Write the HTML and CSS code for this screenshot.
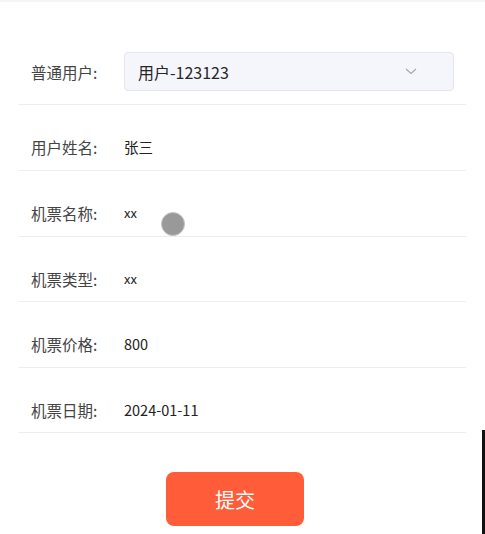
FILE: index.html
```html
<!DOCTYPE html>
<html lang="zh-CN">
<head>
<meta charset="utf-8">
<title>订票</title>
<link rel="stylesheet" href="styles.css">
</head>
<body>
<div class="topbar"></div>
<div class="form">
  <div class="row row-first">
    <span class="label">普通用户:</span>
    <div class="select">
      <span class="select-text">用户-123123</span>
      <svg class="chevron" width="12" height="7" viewBox="0 0 12 7"><path d="M1 1 L6 5.5 L11 1" fill="none" stroke="#a3a6ad" stroke-width="1.1"/></svg>
    </div>
  </div>
  <div class="row">
    <span class="label">用户姓名:</span>
    <span class="value">张三</span>
  </div>
  <div class="row">
    <span class="label">机票名称:</span>
    <span class="value small">xx</span>
  </div>
  <div class="row row-short">
    <span class="label">机票类型:</span>
    <span class="value small">xx</span>
  </div>
  <div class="row">
    <span class="label">机票价格:</span>
    <span class="value">800</span>
  </div>
  <div class="row row-short">
    <span class="label">机票日期:</span>
    <span class="value">2024-01-11</span>
  </div>
  <div class="actions">
    <button class="submit">提交</button>
  </div>
</div>
<div class="touch-dot"></div>
<div class="edge-bar"></div>
</body>
</html>
```

FILE: styles.css
```css
html, body {
  margin: 0;
  padding: 0;
  background: #ffffff;
  font-family: "Noto Sans CJK SC", "Noto Sans", sans-serif;
  width: 485px;
  height: 534px;
  overflow: hidden;
}
body {
  position: relative;
}
.topbar {
  height: 2px;
  background: #f5f5f5;
}
.form {
  padding: 0 19px;
}
.row {
  display: flex;
  align-items: center;
  padding: 30px 12px 11px;
  height: 24px;
  border-bottom: 1px solid #ebedf0;
}
.row-short {
  padding-bottom: 10px;
}
.row-first {
  padding-top: 50px;
  padding-bottom: 13px;
  height: 39px;
}
.label {
  width: 93px;
  flex: none;
  font-size: 15.5px;
  color: #444;
  line-height: 24px;
}
.value {
  font-size: 14.5px;
  color: #222;
  line-height: 24px;
}
.value.small {
  font-size: 13px;
}
.select {
  flex: 1;
  height: 37px;
  border: 1px solid #e4e6ec;
  border-radius: 4px;
  background: #f5f6fb;
  display: flex;
  align-items: center;
  justify-content: space-between;
  padding: 0 36px 0 13px;
}
.select-text {
  font-size: 16px;
  color: #262626;
}
.chevron {
  display: block;
}
.actions {
  padding: 39px 0 0 147px;
}
.submit {
  width: 138px;
  height: 54px;
  border: none;
  border-radius: 8px;
  background: #ff5c39;
  color: #ffffff;
  font-family: "Noto Sans CJK SC", sans-serif;
  font-size: 20px;
  padding: 0;
}
.touch-dot {
  position: absolute;
  left: 161px;
  top: 212px;
  width: 22px;
  height: 22px;
  border-radius: 50%;
  background: #999999;
  border: 1.5px solid #c4c4c4;
}
.edge-bar {
  position: absolute;
  right: 0;
  top: 430px;
  width: 3px;
  height: 104px;
  background: #111;
}
```
